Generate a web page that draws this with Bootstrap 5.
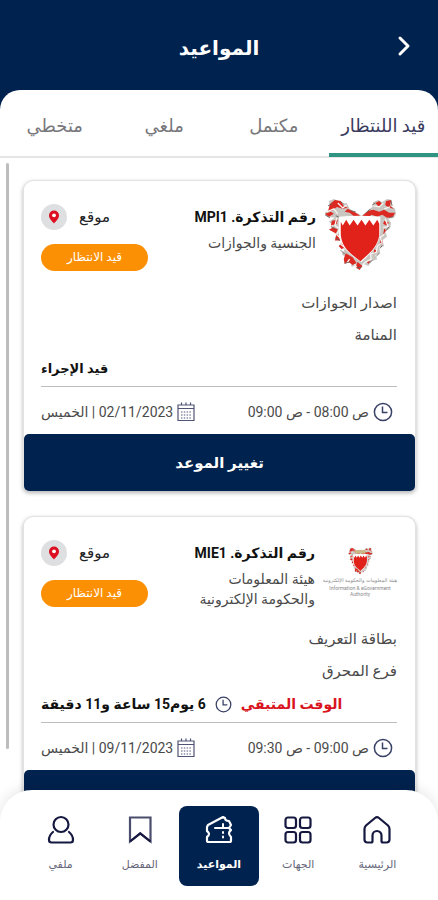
<!DOCTYPE html>
<html lang="ar" dir="rtl">
<head>
<meta charset="utf-8">
<meta name="viewport" content="width=device-width, initial-scale=1">
<title>المواعيد</title>
<link href="https://cdn.jsdelivr.net/npm/bootstrap@5.3.0/dist/css/bootstrap.min.css" rel="stylesheet">
<style>
:root { --navy: #00224e; --orange: #fb9004; --green: #2f9481; }
body { font-family: Roboto, "DejaVu Sans", sans-serif; font-size: 14px; line-height: 20px; color: #4a4a4a; background: #fff; }
svg { display: block; flex: none; }
.top-bar { background: var(--navy); color: #fff; padding: 32px 24px 56px; }
.top-bar h1 { font-size: 20px; line-height: 32px; }
.icon-btn { width: 20px; height: 28px; }
.sheet { margin-top: -30px; border-radius: 20px 20px 0 0; background: #fff; min-height: 0; }
.tabs { border-bottom: 2px solid #e6e6e6; }
.tabs .nav-link { color: #77777b; font-size: 18px; line-height: 24px; padding: 24px 0 15px; border-bottom: 4px solid transparent; margin-bottom: -1px; border-radius: 0; white-space: nowrap; }
.tabs .nav-link.active { color: #3b3b5e; border-color: var(--green); background: none; }
.scroller { min-height: 0; }
.list-col { overflow-y: auto; scrollbar-width: none; padding: 22px 22px 80px 14px; gap: 25px; }
.list-col::-webkit-scrollbar { display: none; }
.thumb { width: 3px; height: 586px; background: #bdbdbd; margin: 5px 0 0 6px; border-radius: 2px; }
.ticket { flex: none; border: 1px solid #e2e2e2; border-bottom: 0; border-radius: 10px 10px 6px 6px; box-shadow: 0 2px 4px rgba(0,0,0,.3); background: #fff; }
.ticket-body { padding: 16px 18px 0 17px; }
.head-row { min-height: 90px; }
.ticket-no { font-size: 14px; line-height: 24px; color: #111; }
.titles { padding-top: 8px; }
.titles p { line-height: 20px; margin: 4px 0 0; }
.side { padding-top: 7px; }
.pin-btn { width: 26px; height: 26px; background: #dedfe1; }
.place { color: #222; font-size: 15px; gap: 12px; }
.status { background: var(--orange); color: #fff; font-size: 12px; line-height: 27px; width: 107px; margin-top: 14px; }
.line { font-size: 15px; line-height: 32px; }
.state { font-size: 13px; line-height: 35px; color: #111; }
.remain { font-size: 14px; gap: 9px; }
.remain .left-label { color: #d9141e; }
.when { border-top: 1px solid #bdbdbd; padding: 13px 4px 10px 0; line-height: 24px; }
.change { background: var(--navy); color: #fff; font-size: 15px; line-height: 24px; padding: 17px 16px 16px; border-radius: 5px; }
.change:hover { background: var(--navy); color: #fff; }
.dock { position: relative; z-index: 2; margin-top: -32px; background: #fff; border-radius: 32px 32px 0 0; box-shadow: 0 -2px 14px rgba(0,0,0,.1); padding: 16px 21px 14px; }
.dock a { color: #66667a; font-size: 11px; line-height: 18px; padding: 8px 0 12px; gap: 10px; border-radius: 8px; flex: 1 1 0; }
.dock a.current { background: var(--navy); color: #fff; }
.org { width: 74px; font-size: 5px; line-height: 6px; color: #8a8a8a; padding-top: 14px; }
.org .org-ar { font-family: "DejaVu Sans", sans-serif; line-height: 10px; white-space: nowrap; }
</style>
</head>
<body class="vh-100 d-flex flex-column overflow-hidden">
<svg width="0" height="0" class="position-absolute" aria-hidden="true">
  <defs>
    <symbol id="clock" viewBox="0 0 20 20"><circle cx="10" cy="10" r="8.600" fill="none" stroke="#3a4166" stroke-width="1.500"/><path d="M9.500 4.500v6h5" fill="none" stroke="#3a4166" stroke-width="1.500"/></symbol>
    <symbol id="cal" viewBox="0 0 18 20"><path d="M1 3h16v15.500h-16zM1 6.500h16M4.500 .5v3M9 .5v3M13.500 .5v3" fill="none" stroke="#4f5474" stroke-width="1.200"/><path d="M4 10h10M4 13h10M4 16h10" stroke="#8b90a4" stroke-width="1.500" stroke-dasharray="1.500 1.300"/></symbol>
    <symbol id="pin" viewBox="0 0 12 14"><path d="M6 .5a5 5 0 0 0-5 5c0 3.200 3 5.500 5 8 2-2.500 5-4.800 5-8a5 5 0 0 0-5-5z" fill="#dc1021"/><circle cx="6" cy="5.300" r="1.900" fill="#fff"/></symbol>
    <symbol id="arms" viewBox="0 0 74 76">
      <path d="M5 4l5-2 5 2 2 3 6-1 3 6 7 4 5 3 6-5 5-4 1-5 5-2 4 2 5-3 5 1-1 6 4 3 1 5-2 4-6 1 3 4-1 6-5 3 2 5-5 4 2 6-5 1 1 6-5 2 2 4-6 2-3 5-5-2-3 4-4-3-5 2-1-5-6 1 1-6-4-3 3-5-6-3 3-5-7-3 2-6-7-2 3-5-4-4 6-4-8-1-2-4 5-4z" fill="#c9c6c2"/>
      <g fill="#dc2a22">
        <path d="M6 7l5-4 6 1 3 5 4 2-5 1-6-2-5 4-4 1zM1 17l6-2 3 2-5 3zM24 12l8 4 5 3-6 1-5-4-5-1zM39 19l6-5 5-1 6 2 5-2 5 3 6 0-2 4-6 1-5-3-5 2-6-2-3 3zM52 6l4-2 3 3-3 3zM63 4l5-1-1 6 4 3-5-1-4-3zM8 24l6-1-1 4-6 2zM5 33l5-2 4 2-2 4zM13 37l3 2 0 5-5 0zM18 46l4 4-4 3-3-3zM22 57l7 4 4 6-4 2-4-3-4 2-1-5zM34 66l5 4-3 4-4-3zM61 24l5 2-3 3-3-2zM63 34l-3 4 1-6zM58 42l2 4-4 3zM51 53l3 2-4 3zM43 65l4-1-2 4z"/>
      </g>
      <g fill="none" stroke="#f7f5f3" stroke-width="1.300"><path d="M14 6l5 5 4-3M3 15l7-3 4 5M50 9l6 1 4-4M61 12l6-2M62 22l3 8-5 1M13 21l-2 8 5 3-3 6 5 5-1 5 5 4M61 38l-4 3 2 5-5 4-1 6-6 2 1 5-6 3-3 3M26 63l-3 4M31 68l2 3"/></g>
      <g fill="none" stroke="#6d5c57" stroke-width=".9"><path d="M4 9l4-2M17 5l3 2M1 18l5 3M12 19l4 2M49 8l3-2M68 4l1 5M70 20l-4 1M66 30l-3 4M7 30l4 2M12 42l4 2M17 54l4 4M21 67l5-1M33 72l5-1M46 67l3-3M53 60l3-3M59 49l-2 3M27 14l5 1M43 16l4-4"/></g>
      <path d="M15 20q21-2 42 0v16C56 50 46 58 38 66 27 59 17 51 15 38z" fill="#fff"/>
      <path d="M17 25l2 4 3.500-6 3.500 6 4-6 4 6 4-6 4 6 4-6 4 6 4-6 2 4v12c-2 12-10 18-19 26C26 57 18 51 17 38z" fill="#e0221b"/>
    </symbol>
  </defs>
</svg>

<header class="top-bar d-flex align-items-center flex-shrink-0">
  <button type="button" class="btn p-0 border-0 icon-btn" aria-label="رجوع"><svg width="20" height="28" viewBox="0 0 20 28"><path d="M6 4l8 8-8 8" fill="none" stroke="#fff" stroke-width="3" stroke-linecap="round" stroke-linejoin="round"/></svg></button>
  <h1 class="flex-grow-1 text-center fw-bold m-0">المواعيد</h1>
  <span class="icon-btn"></span>
</header>

<main class="sheet flex-grow-1 d-flex flex-column">
  <ul class="nav tabs nav-fill p-0 flex-nowrap flex-shrink-0">
    <li class="nav-item col-3"><a class="nav-link active" aria-current="page" href="#">قيد اللنتظار</a></li>
    <li class="nav-item col-3"><a class="nav-link" href="#">مكتمل</a></li>
    <li class="nav-item col-3"><a class="nav-link" href="#">ملغي</a></li>
    <li class="nav-item col-3"><a class="nav-link" href="#">متخطي</a></li>
  </ul>

  <div class="scroller flex-grow-1 d-flex">
    <div class="list-col flex-grow-1 d-flex flex-column">
      <article class="ticket">
        <div class="ticket-body">
          <div class="head-row d-flex gap-2">
            <svg width="73" height="75"><use href="#arms"/></svg>
            <div class="titles flex-grow-1">
              <h2 class="ticket-no fw-bold m-0">رقم التذكرة. MPI1</h2>
              <p>الجنسية والجوازات</p>
            </div>
            <div class="side">
              <div class="place d-flex align-items-center justify-content-end"><span>موقع</span><button type="button" class="btn p-0 border-0 rounded-circle pin-btn d-flex align-items-center justify-content-center" aria-label="موقع"><svg width="12" height="14"><use href="#pin"/></svg></button></div>
              <div class="status rounded-pill text-center">قيد الانتظار</div>
            </div>
          </div>
          <div class="line">اصدار الجوازات</div>
          <div class="line">المنامة</div>
          <div class="state fw-bold d-flex justify-content-end">قيد الإجراء</div>
          <div class="when d-flex justify-content-between">
            <span class="d-flex align-items-center gap-1"><svg width="20" height="20"><use href="#clock"/></svg>ص 08:00 - ص 09:00</span>
            <span class="d-flex align-items-center gap-1"><svg width="18" height="20"><use href="#cal"/></svg>02/11/2023 | الخميس</span>
          </div>
        </div>
        <button type="button" class="btn change border-0 w-100 fw-bold">تغيير الموعد</button>
      </article>

      <article class="ticket">
        <div class="ticket-body">
          <div class="head-row d-flex gap-2">
            <div class="org d-flex flex-column align-items-center text-center">
              <svg width="25" height="28" viewBox="0 0 74 76" preserveAspectRatio="none"><use href="#arms" width="74" height="76"/><path d="M22 8h30v10H22z" fill="#cbb98c"/></svg>
              <span class="org-ar">هيئة المعلومات والحكومة الإلكترونية</span>
              <span dir="ltr">Information &amp; eGovernment Authority</span>
            </div>
            <div class="titles flex-grow-1">
              <h2 class="ticket-no fw-bold m-0">رقم التذكرة. MIE1</h2>
              <p>هيئة المعلومات<br>والحكومة الإلكترونية</p>
            </div>
            <div class="side">
              <div class="place d-flex align-items-center justify-content-end"><span>موقع</span><button type="button" class="btn p-0 border-0 rounded-circle pin-btn d-flex align-items-center justify-content-center" aria-label="موقع"><svg width="12" height="14"><use href="#pin"/></svg></button></div>
              <div class="status rounded-pill text-center">قيد الانتظار</div>
            </div>
          </div>
          <div class="line">بطاقة التعريف</div>
          <div class="line">فرع المحرق</div>
          <div class="state remain fw-bold d-flex align-items-center justify-content-end"><span class="left-label">الوقت المتبقي</span><svg width="17" height="17"><use href="#clock"/></svg><span>6 يوم15 ساعة و11 دقيقة</span></div>
          <div class="when d-flex justify-content-between">
            <span class="d-flex align-items-center gap-1"><svg width="20" height="20"><use href="#clock"/></svg>ص 09:00 - ص 09:30</span>
            <span class="d-flex align-items-center gap-1"><svg width="18" height="20"><use href="#cal"/></svg>09/11/2023 | الخميس</span>
          </div>
        </div>
        <button type="button" class="btn change border-0 w-100 fw-bold">تغيير الموعد</button>
      </article>
    </div>
    <div class="thumb"></div>
  </div>
</main>

<nav class="dock d-flex flex-shrink-0" aria-label="القائمة">
  <a href="#" class="d-flex flex-column align-items-center text-decoration-none"><svg width="32" height="32" viewBox="0 0 32 32"><path d="M3.500 15c0-1.500.5-2.500 1.500-3.500l9-7.500q2-1.600 4 0l9 7.500c1 1 1.500 2 1.500 3.500v10.500q0 3-3 3h-3.500q-1.500 0-1.500-1.500v-5.500a4.500 4.500 0 0 0-9 0V27q0 1.500-1.500 1.500H6.500q-3 0-3-3z" fill="none" stroke="#15183f" stroke-width="2.200"/></svg>الرئيسية</a>
  <a href="#" class="d-flex flex-column align-items-center text-decoration-none"><svg width="32" height="32" viewBox="0 0 32 32"><g fill="none" stroke="#15183f" stroke-width="2.200"><rect x="3.500" y="3.500" width="10.500" height="10.500" rx="2.500"/><rect x="18" y="3.500" width="10.500" height="10.500" rx="2.500"/><rect x="3.500" y="18" width="10.500" height="10.500" rx="2.500"/><rect x="18" y="18" width="10.500" height="10.500" rx="2.500"/></g></svg>الجهات</a>
  <a href="#" class="current fw-bold d-flex flex-column align-items-center text-decoration-none" aria-current="page"><svg width="32" height="32" viewBox="0 0 32 32"><g fill="none" stroke="#fff" stroke-width="2.200" stroke-linejoin="round" stroke-linecap="round"><path d="M4 13l1-2L20 3l2 1q0 3 4 3l2 4-2 3 2 2q-4 3 0 7v3.500q0 1.500-1.500 1.500h-21Q4 28 4 26.500V23q4-3 0-6z"/><path d="M12 14h14M20 10v4" stroke-width="2"/><path d="M20 18v8" stroke-dasharray="1 3.500" stroke-width="2"/></g></svg>المواعيد</a>
  <a href="#" class="d-flex flex-column align-items-center text-decoration-none"><svg width="32" height="32" viewBox="0 0 32 32"><path d="M6 3.500h20.500v24L16.200 19.500 6 27.500z" fill="none" stroke="#4a4d6c" stroke-width="2.200"/><path d="M6 27.500l10.200-8 10.300 8" fill="none" stroke="#15183f" stroke-width="2.200"/></svg>المفضل</a>
  <a href="#" class="d-flex flex-column align-items-center text-decoration-none"><svg width="32" height="32" viewBox="0 0 32 32"><g fill="none" stroke="#15183f" stroke-width="2.200" stroke-linecap="round"><circle cx="16" cy="10.500" r="7.500"/><path d="M8 18c-2.500 2-4 5-4 8q0 2.500 2.500 2.500h19q2.500 0 2.500-2.500c0-3-1.500-6-4-8"/></g></svg>ملفي</a>
</nav>
</body>
</html>
